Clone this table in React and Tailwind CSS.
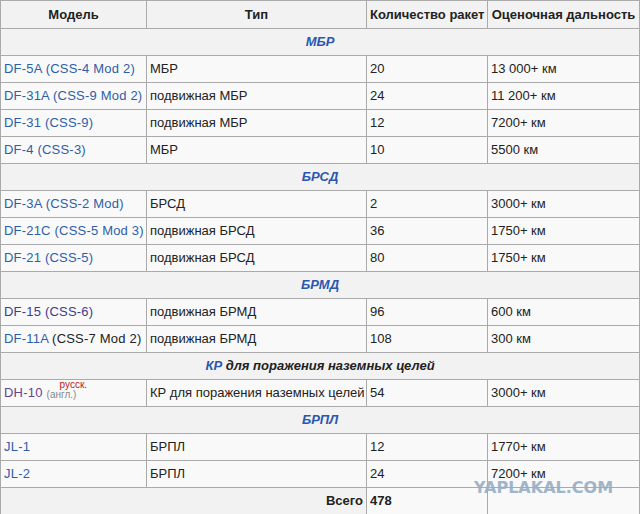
import React from 'react';

const sections = [
    {
        title: 'МБР',
        rows: [
            { model: 'DF-5A (CSS-4 Mod 2)', type: 'МБР', count: '20', range: '13 000+ км' },
            { model: 'DF-31A (CSS-9 Mod 2)', type: 'подвижная МБР', count: '24', range: '11 200+ км' },
            { model: 'DF-31 (CSS-9)', type: 'подвижная МБР', count: '12', range: '7200+ км' },
            { model: 'DF-4 (CSS-3)', type: 'МБР', count: '10', range: '5500 км' },
        ],
    },
    {
        title: 'БРСД',
        rows: [
            { model: 'DF-3A (CSS-2 Mod)', type: 'БРСД', count: '2', range: '3000+ км' },
            { model: 'DF-21C (CSS-5 Mod 3)', type: 'подвижная БРСД', count: '36', range: '1750+ км' },
            { model: 'DF-21 (CSS-5)', type: 'подвижная БРСД', count: '80', range: '1750+ км' },
        ],
    },
    {
        title: 'БРМД',
        rows: [
            { model: 'DF-15 (CSS-6)', visited: true, type: 'подвижная БРМД', count: '96', range: '600 км' },
            { model: 'DF-11A', rest: ' (CSS-7 Mod 2)', type: 'подвижная БРМД', count: '108', range: '300 км' },
        ],
    },
    {
        title: 'КР',
        extra: ' для поражения наземных целей',
        rows: [
            { model: 'DH-10', dh: true, type: 'КР для поражения наземных целей', count: '54', range: '3000+ км' },
        ],
    },
    {
        title: 'БРПЛ',
        rows: [
            { model: 'JL-1', type: 'БРПЛ', count: '12', range: '1770+ км' },
            { model: 'JL-2', type: 'БРПЛ', count: '24', range: '7200+ км' },
        ],
    },
];

const cell = 'border border-[#aaa] px-[3px] h-[27px] align-middle whitespace-nowrap';

export default function App() {
    return (
        <div className="relative w-[640px] h-[514px] overflow-hidden bg-white font-['Liberation_Sans',Arial,sans-serif] text-[13px] text-[#222]">
            <table className="border-collapse w-[639px] table-fixed bg-[#f9f9f9]">
                <colgroup>
                    <col className="w-[146px]" />
                    <col className="w-[220px]" />
                    <col className="w-[121px]" />
                    <col className="w-[152px]" />
                </colgroup>
                <thead>
                    <tr className="bg-[#f2f2f2] font-bold">
                        <th className={`${cell} h-[28px] text-center`}>Модель</th>
                        <th className={`${cell} h-[28px] text-center`}>Тип</th>
                        <th className={`${cell} h-[28px] text-center px-[1px]`}>Количество ракет</th>
                        <th className={`${cell} h-[28px] text-center px-[1px]`}>Оценочная дальность</th>
                    </tr>
                </thead>
                <tbody>
                    {sections.map((s) => (
                        <React.Fragment key={s.title}>
                            <tr className="bg-[#f2f2f2]">
                                <td colSpan={4} className={`${cell} text-center font-bold italic`}>
                                    <span className="text-[#2a57b0]">{s.title}</span>
                                    {s.extra && <span>{s.extra}</span>}
                                </td>
                            </tr>
                            {s.rows.map((r) => (
                                <tr key={r.model}>
                                    <td className={`${cell} tracking-[0.2px]`}>
                                        {r.dh ? (
                                            <span>
                                                <span className="text-[#6b4090]">{r.model}</span>
                                                <span className="relative inline-block w-[40px] h-[10px] ml-[4px] tracking-normal">
                                                    <span className="absolute left-[13px] top-[-10px] text-[10px] text-[#b81d1d]">русск.</span>
                                                    <span className="absolute left-0 top-[0px] text-[10px] text-[#888]">(англ.)</span>
                                                </span>
                                            </span>
                                        ) : (
                                            <span className={r.visited ? 'text-[#3c3d8f]' : 'text-[#2f5ea8]'}>{r.model}</span>
                                        )}
                                        {r.rest && <span>{r.rest}</span>}
                                    </td>
                                    <td className={cell}>{r.type}</td>
                                    <td className={cell}>{r.count}</td>
                                    <td className={cell}>{r.range}</td>
                                </tr>
                            ))}
                        </React.Fragment>
                    ))}
                    <tr>
                        <td colSpan={2} className={`${cell} bg-[#f2f2f2] text-right font-bold`}>Всего</td>
                        <td className={`${cell} font-bold`}>478</td>
                        <td className={cell}></td>
                    </tr>
                </tbody>
            </table>
            <div className="absolute left-[474px] top-[476px] text-[16px] font-black text-[#97aec6] opacity-90 font-['DejaVu_Sans',sans-serif]">
                YAPLAKAL.COM
            </div>
        </div>
    );
}
